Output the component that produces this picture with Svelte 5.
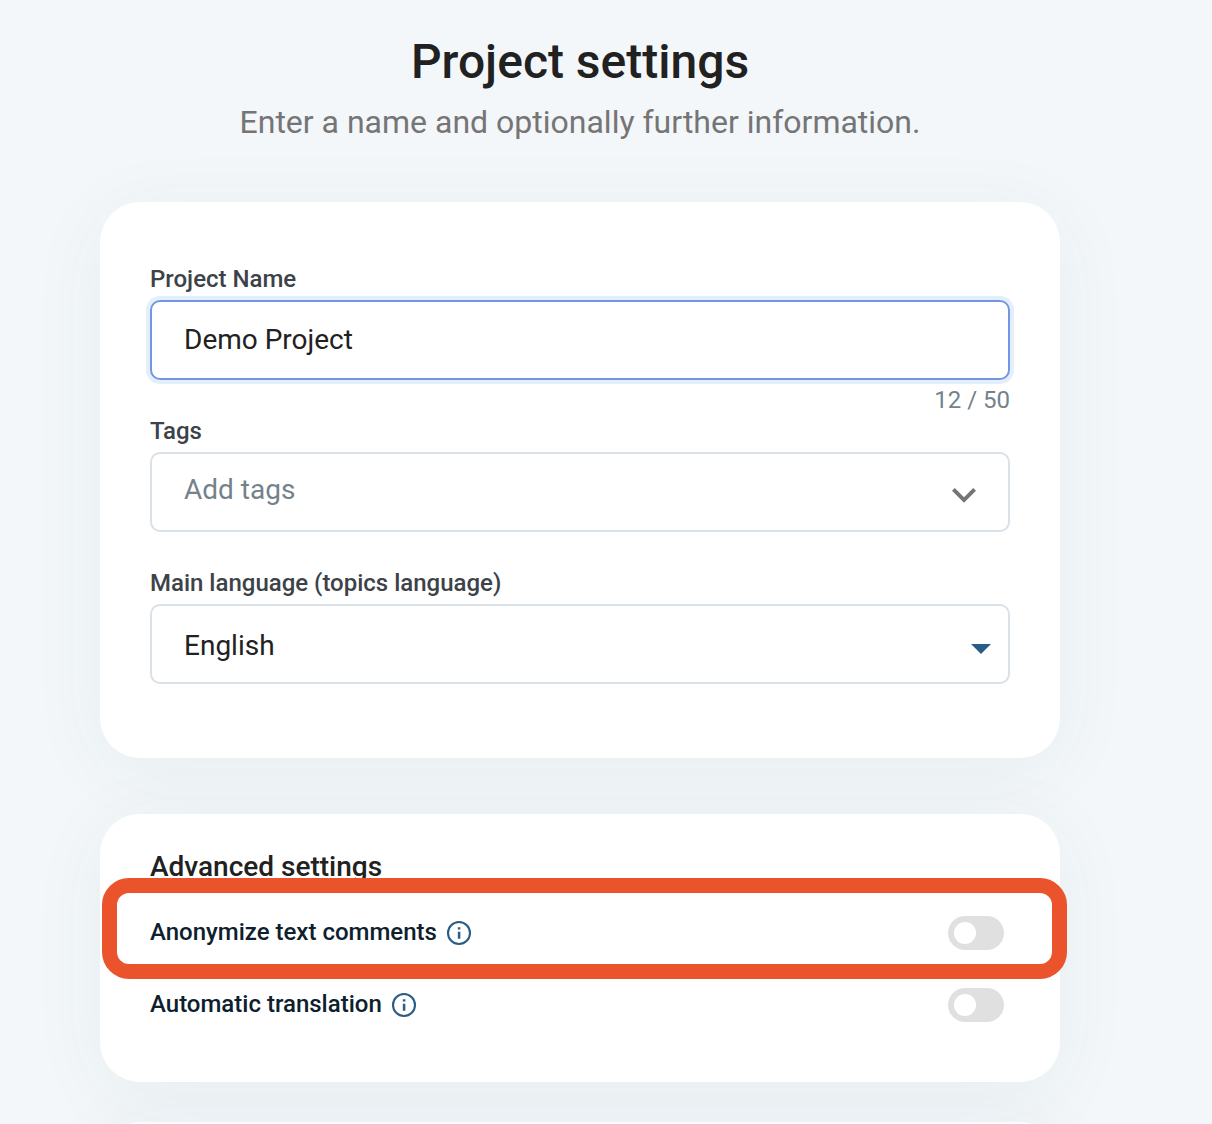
<script>
  let name = $state('Demo Project');
  const limit = 50;
  const options = ['Anonymize text comments', 'Automatic translation'];
</script>

<main>
  <header>
    <h1>Project settings</h1>
    <p>Enter a name and optionally further information.</p>
  </header>

  <section class="card basics">
    <div class="label">Project Name</div>
    <div class="field focused"><span>{name}</span></div>
    <div class="counter">{name.length} / {limit}</div>

    <div class="label">Tags</div>
    <div class="field tags">
      <span>Add tags</span>
      <svg class="chevron" width="24" height="15" viewBox="0 0 24 15">
        <path d="M2.82 0 L12 9.17 L21.18 0 L24 2.83 L12 14.83 L0 2.83 Z" fill="#757575" />
      </svg>
    </div>

    <div class="label language-label">Main language (topics language)</div>
    <div class="field language">
      <span>English</span>
      <svg class="caret" width="20" height="10" viewBox="0 0 20 10">
        <path d="M0 0 H20 L10 10 Z" fill="#2a5c85" />
      </svg>
    </div>
  </section>

  <section class="card advanced">
    <h2>Advanced settings</h2>
    {#each options as option, i}
      <div class="option">
        <span>{option}</span>
        <svg class="info" width="24" height="24" viewBox="0 0 24 24">
          <circle cx="12" cy="12" r="11" fill="none" stroke="#2a5c85" stroke-width="2.1" />
          <path d="M12.1 6.2v2.4M12.1 10.7v7.1" stroke="#2a5c85" stroke-width="2.5" />
        </svg>
        <div class="toggle"><i></i></div>
        {#if i === 0}<div class="highlight"></div>{/if}
      </div>
    {/each}
  </section>

  <section class="card next"></section>
</main>

<style>
  :global(body) {
    background: #f3f7fa;
  }
  main {
    box-sizing: border-box;
    width: 1212px;
    height: 1124px;
    padding: 32px 152px 0 100px;
    overflow: hidden;
    font-family: Roboto, sans-serif;
    color: #212121;
  }
  header {
    height: 170px;
    text-align: center;
  }
  h1 {
    margin: 0;
    font-size: 48px;
    line-height: 60px;
    font-weight: 500;
  }
  p {
    margin: 10px 0 0;
    font-size: 32px;
    line-height: 40px;
    color: #757575;
  }
  .card {
    position: relative;
    box-sizing: border-box;
    border-radius: 40px;
    background: #fff;
    box-shadow: 0 12px 80px rgba(38, 80, 80, 0.055);
  }
  .basics {
    height: 556px;
    padding: 62px 50px 0;
  }
  .label {
    height: 36px;
    font-size: 24px;
    line-height: 30px;
    font-weight: 500;
    color: #3d4249;
  }
  .language-label {
    margin-top: 36px;
  }
  .field {
    display: flex;
    align-items: center;
    justify-content: space-between;
    box-sizing: border-box;
    height: 80px;
    padding: 0 32px;
    border: 2px solid #dae1e7;
    border-radius: 10px;
    font-size: 28px;
    line-height: 40px;
  }
  .focused {
    border-color: #7495e2;
    box-shadow: 0 0 0 4px #e3effd;
  }
  .focused span {
    margin-bottom: 1px;
  }
  .counter {
    height: 36px;
    font-size: 24px;
    line-height: 40px;
    text-align: right;
    color: #75828a;
  }
  .tags {
    color: #75828a;
  }
  .tags span {
    margin-bottom: 5px;
  }
  .chevron {
    margin-top: 6px;
  }
  .language {
    padding-right: 17px;
  }
  .language span {
    margin-top: 3px;
  }
  .caret {
    margin-top: 10px;
  }
  .advanced {
    height: 268px;
    margin-top: 56px;
    padding: 32px 50px 0;
    z-index: 1;
  }
  h2 {
    height: 50px;
    margin: 0;
    font-size: 28px;
    line-height: 42px;
    font-weight: 500;
  }
  .option {
    position: relative;
    display: flex;
    align-items: center;
    height: 72px;
    font-size: 24px;
    font-weight: 500;
    color: #0d202d;
  }
  .option span {
    line-height: 30px;
  }
  .info {
    margin: 2px 0 0 10px;
    overflow: visible;
  }
  .toggle {
    box-sizing: border-box;
    width: 56px;
    height: 34px;
    margin: 2px 6px 0 auto;
    padding: 6px;
    border-radius: 17px;
    background: #e0e0e0;
  }
  .toggle i {
    display: block;
    width: 22px;
    height: 22px;
    border-radius: 50%;
    background: #fff;
  }
  .highlight {
    position: absolute;
    box-sizing: border-box;
    top: -18px;
    left: -48px;
    width: 965px;
    height: 101px;
    border: 15px solid #eb532d;
    border-radius: 27px;
  }
  .next {
    height: 200px;
    margin-top: 40px;
  }
</style>
